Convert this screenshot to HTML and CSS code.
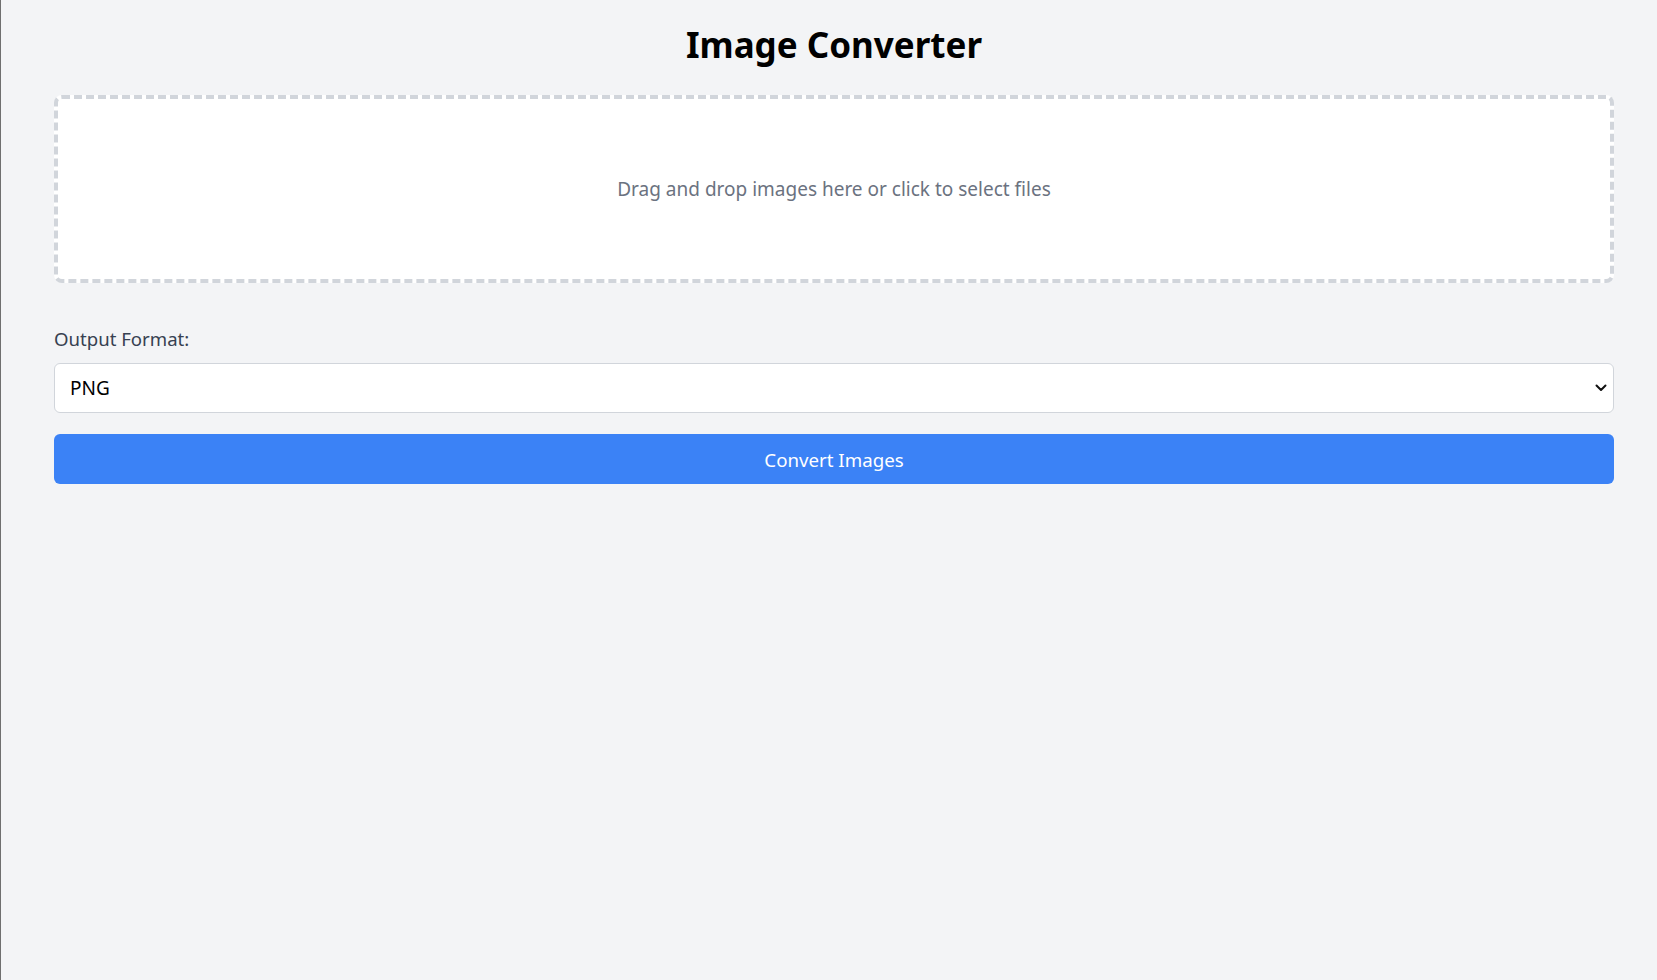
FILE: index.html
```html
<!DOCTYPE html>
<html lang="en">
<head>
<meta charset="utf-8">
<title>Image Converter</title>
<link rel="stylesheet" href="styles.css">
</head>
<body>
<main class="page">
  <h1 class="title">Image Converter</h1>
  <div class="dropzone">
    <p class="dropzone-text">Drag and drop images here or click to select files</p>
  </div>
  <div class="field">
    <label class="field-label" for="fmt">Output Format:</label>
    <div class="select-wrap">
      <select id="fmt" class="select">
        <option>PNG</option>
        <option>JPEG</option>
        <option>WEBP</option>
      </select>
      <svg class="select-arrow" width="12" height="8" viewBox="0 0 12 8"><path d="M1.5 1.5 L6 6 L10.5 1.5" fill="none" stroke="#111" stroke-width="2" stroke-linecap="round" stroke-linejoin="round"/></svg>
    </div>
  </div>
  <button class="btn">Convert Images</button>
</main>
</body>
</html>
```

FILE: styles.css
```css
html, body {
  margin: 0;
  padding: 0;
  height: 100%;
}
body {
  background: #f3f4f6;
  border-left: 1px solid #6f6f6f;
  font-family: "Noto Sans", "Open Sans", sans-serif;
  box-sizing: border-box;
}
.page {
  padding: 0 43px 0 53px;
  display: flex;
  flex-direction: column;
}
.title {
  margin: 18px 0 23px;
  text-align: center;
  font-size: 35px;
  line-height: 54px;
  font-weight: 700;
  color: #000;
}
.dropzone {
  height: 188px;
  box-sizing: border-box;
  border: 4px dashed #d1d5db;
  border-radius: 8px;
  background: #fff;
  display: flex;
  align-items: center;
  justify-content: center;
}
.dropzone-text {
  margin: 0;
  font-size: 19px;
  color: #6b7280;
}
.field {
  margin-top: 45px;
  display: flex;
  flex-direction: column;
  gap: 13px;
}
.field-label {
  font-size: 18.6px;
  line-height: 22px;
  color: #374151;
}
.select-wrap {
  position: relative;
}
.select {
  width: 100%;
  height: 50px;
  box-sizing: border-box;
  appearance: none;
  -webkit-appearance: none;
  background: #fff;
  border: 1px solid #d1d5db;
  border-radius: 6px;
  padding: 0 15px;
  font-family: inherit;
  font-size: 19px;
  color: #000;
}
.select-arrow {
  position: absolute;
  right: 7px;
  top: 21px;
}
.btn {
  margin-top: 21px;
  height: 50px;
  border: none;
  border-radius: 6px;
  background: #3b82f6;
  color: #fff;
  font-family: inherit;
  font-size: 18.7px;
}
```
